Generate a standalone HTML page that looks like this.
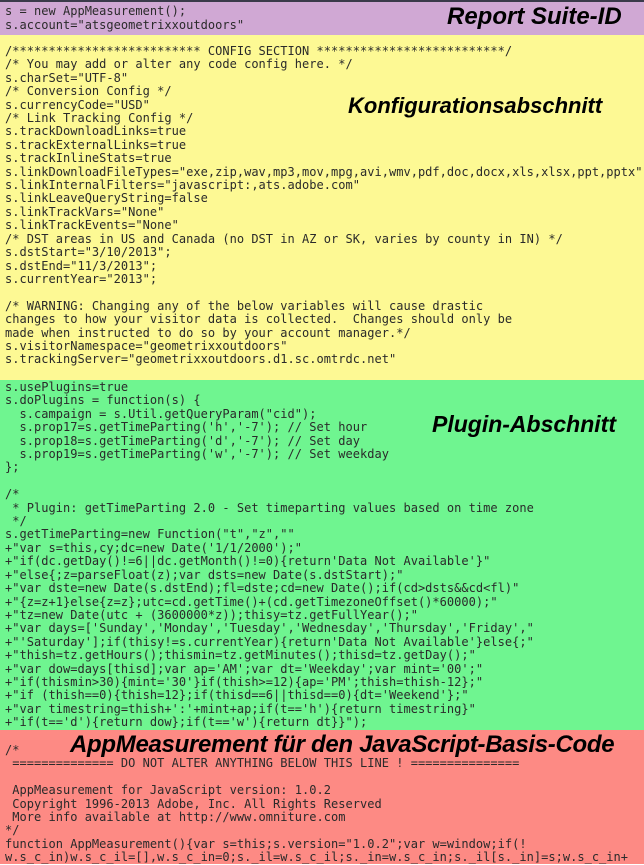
<!DOCTYPE html>
<html><head><meta charset="utf-8"><style>
html,body{margin:0;padding:0;width:644px;height:864px;overflow:hidden;background:#fff}
.s{position:absolute;left:0;width:644px}
pre{position:absolute;left:5px;margin:0;font-family:"DejaVu Sans Mono","Liberation Mono",monospace;font-size:12px;line-height:13.4px;color:#2a2a2a;white-space:pre;letter-spacing:0.02px}
.h{position:absolute;font-family:"Liberation Sans",sans-serif;font-weight:bold;font-style:italic;color:#000;white-space:nowrap}
</style></head><body>
<div class="s" style="top:0;height:35px;background:#d0a8d4;border-top:2px solid #3a3a4a;box-sizing:border-box"></div>
<div class="s" style="top:35px;height:345px;background:#fdf994"></div>
<div class="s" style="top:380px;height:350px;background:#6ff590"></div>
<div class="s" style="top:730px;height:134px;background:#fd8a84"></div>

<pre style="top:5.3px">s = new AppMeasurement();
s.account="atsgeometrixxoutdoors"</pre>

<pre style="top:45px">/************************** CONFIG SECTION **************************/
/* You may add or alter any code config here. */
s.charSet="UTF-8"
/* Conversion Config */
s.currencyCode="USD"
/* Link Tracking Config */
s.trackDownloadLinks=true
s.trackExternalLinks=true
s.trackInlineStats=true
s.linkDownloadFileTypes="exe,zip,wav,mp3,mov,mpg,avi,wmv,pdf,doc,docx,xls,xlsx,ppt,pptx"
s.linkInternalFilters="javascript:,ats.adobe.com"
s.linkLeaveQueryString=false
s.linkTrackVars="None"
s.linkTrackEvents="None"
/* DST areas in US and Canada (no DST in AZ or SK, varies by county in IN) */
s.dstStart="3/10/2013";
s.dstEnd="11/3/2013";
s.currentYear="2013";

/* WARNING: Changing any of the below variables will cause drastic
changes to how your visitor data is collected.  Changes should only be
made when instructed to do so by your account manager.*/
s.visitorNamespace="geometrixxoutdoors"
s.trackingServer="geometrixxoutdoors.d1.sc.omtrdc.net"</pre>

<pre style="top:381px">s.usePlugins=true
s.doPlugins = function(s) {
  s.campaign = s.Util.getQueryParam("cid");
  s.prop17=s.getTimeParting('h','-7'); // Set hour
  s.prop18=s.getTimeParting('d','-7'); // Set day
  s.prop19=s.getTimeParting('w','-7'); // Set weekday
};

/*
 * Plugin: getTimeParting 2.0 - Set timeparting values based on time zone
 */
s.getTimeParting=new Function("t","z",""
+"var s=this,cy;dc=new Date('1/1/2000');"
+"if(dc.getDay()!=6||dc.getMonth()!=0){return'Data Not Available'}"
+"else{;z=parseFloat(z);var dsts=new Date(s.dstStart);"
+"var dste=new Date(s.dstEnd);fl=dste;cd=new Date();if(cd>dsts&amp;&amp;cd&lt;fl)"
+"{z=z+1}else{z=z};utc=cd.getTime()+(cd.getTimezoneOffset()*60000);"
+"tz=new Date(utc + (3600000*z));thisy=tz.getFullYear();"
+"var days=['Sunday','Monday','Tuesday','Wednesday','Thursday','Friday',"
+"'Saturday'];if(thisy!=s.currentYear){return'Data Not Available'}else{;"
+"thish=tz.getHours();thismin=tz.getMinutes();thisd=tz.getDay();"
+"var dow=days[thisd];var ap='AM';var dt='Weekday';var mint='00';"
+"if(thismin>30){mint='30'}if(thish>=12){ap='PM';thish=thish-12};"
+"if (thish==0){thish=12};if(thisd==6||thisd==0){dt='Weekend'};"
+"var timestring=thish+':'+mint+ap;if(t=='h'){return timestring}"
+"if(t=='d'){return dow};if(t=='w'){return dt}}");</pre>

<pre style="top:744px">/*
 ============== DO NOT ALTER ANYTHING BELOW THIS LINE ! ===============

 AppMeasurement for JavaScript version: 1.0.2
 Copyright 1996-2013 Adobe, Inc. All Rights Reserved
 More info available at http://www.omniture.com
*/
function AppMeasurement(){var s=this;s.version="1.0.2";var w=window;if(!
w.s_c_in)w.s_c_il=[],w.s_c_in=0;s._il=w.s_c_il;s._in=w.s_c_in;s._il[s._in]=s;w.s_c_in+</pre>

<div class="h" style="left:447px;top:3px;font-size:24px">Report Suite-ID</div>
<div class="h" style="left:348px;top:93px;font-size:22px">Konfigurationsabschnitt</div>
<div class="h" style="left:432px;top:411px;font-size:23px">Plugin-Abschnitt</div>
<div class="h" style="left:70px;top:731px;font-size:24px;letter-spacing:-0.3px">AppMeasurement für den JavaScript-Basis-Code</div>
</body></html>
